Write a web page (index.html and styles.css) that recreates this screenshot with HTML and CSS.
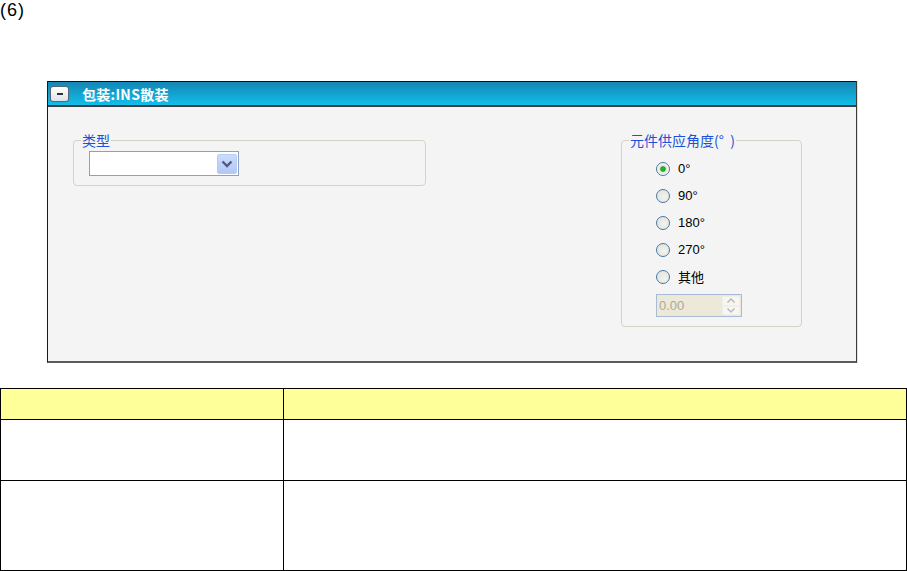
FILE: index.html
```html
<!DOCTYPE html>
<html lang="zh">
<head>
<meta charset="utf-8">
<title>包装:INS散装</title>
<link rel="stylesheet" href="styles.css">
</head>
<body>
<p class="num">(6)</p>
<div class="panel">
  <div class="titlebar">
    <span class="minbtn"><span class="minbar"></span></span>
    <span class="title">包装:INS散装</span>
  </div>
  <div class="pbody">
    <fieldset class="grp grp-type">
      <legend>类型</legend>
      <div class="grp-in">
        <div class="combo">
          <span class="combo-btn">
            <svg width="12" height="8" viewBox="0 0 12 8"><path d="M1.5 1.5 L6 6 L10.5 1.5" fill="none" stroke="#4a5d80" stroke-width="2.4"/></svg>
          </span>
        </div>
      </div>
    </fieldset>
    <fieldset class="grp grp-angle">
      <legend>元件供应角度(°&nbsp;&nbsp;)</legend>
      <div class="grp-in angle-in">
        <div class="radio-row"><span class="radio checked"></span><span class="rlabel">0°</span></div>
        <div class="radio-row"><span class="radio"></span><span class="rlabel">90°</span></div>
        <div class="radio-row"><span class="radio"></span><span class="rlabel">180°</span></div>
        <div class="radio-row"><span class="radio"></span><span class="rlabel">270°</span></div>
        <div class="radio-row"><span class="radio"></span><span class="rlabel">其他</span></div>
        <div class="spin">
          <span class="spin-val">0.00</span>
          <span class="spin-btns">
            <span class="spin-b"><svg width="8" height="5" viewBox="0 0 8 5"><path d="M0.5 4.5 L4 1 L7.5 4.5" fill="none" stroke="#b8b8b0" stroke-width="1.4"/></svg></span>
            <span class="spin-b"><svg width="8" height="5" viewBox="0 0 8 5"><path d="M0.5 0.5 L4 4 L7.5 0.5" fill="none" stroke="#b8b8b0" stroke-width="1.4"/></svg></span>
          </span>
        </div>
      </div>
    </fieldset>
  </div>
</div>
<table class="tbl">
  <tr class="hd"><td class="c1"></td><td></td></tr>
  <tr class="r1"><td class="c1"></td><td></td></tr>
  <tr class="r2"><td class="c1"></td><td></td></tr>
</table>
</body>
</html>
```
FILE: styles.css
```css
html, body {
  margin: 0;
  padding: 0;
  background: #ffffff;
}
body {
  font-family: "Liberation Sans", Arial, "Noto Sans CJK SC", sans-serif;
  width: 907px;
}
.num {
  margin: 0;
  font-size: 18px;
  line-height: 20px;
  height: 20px;
  color: #000;
  letter-spacing: 1px;
}
.panel {
  margin: 61px 0 0 47px;
  width: 808px;
  border-left: 1px solid #1a1a1a;
  border-right: 1px solid #3a3a36;
  border-bottom: 2px solid #5c5c56;
  box-shadow: 1px 0 0 #e6e4d8;
}
.titlebar {
  height: 23px;
  border-top: 1px solid #111;
  border-bottom: 2px solid #3a3f44;
  background: linear-gradient(#1585b4, #10bfea);
  display: flex;
  align-items: center;
}
.minbtn {
  margin-left: 2px;
  width: 17px;
  height: 14px;
  border: 1px solid #59656f;
  border-radius: 3px;
  background: linear-gradient(#ffffff, #dfe3e8);
  display: flex;
  align-items: center;
  justify-content: center;
}
.minbar {
  width: 6px;
  height: 2px;
  background: #2b2f36;
}
.title {
  margin-left: 13px;
  color: #ffffff;
  font-family: "Noto Sans CJK SC", sans-serif;
  font-weight: bold;
  font-size: 14px;
  line-height: 16px;
  letter-spacing: 0.3px;
}
.pbody {
  height: 254px;
  background: #f4f4f4;
  box-sizing: border-box;
  padding: 25px 54px 0 25px;
  display: flex;
  justify-content: space-between;
  align-items: flex-start;
}
.grp {
  margin: 0;
  padding: 0;
  border: 1px solid #d3d3c2;
  border-radius: 4px;
  min-width: 0;
}
.grp legend {
  margin-left: 7px;
  padding: 0 1px;
  font-family: "Noto Sans CJK SC", sans-serif;
  font-size: 14px;
  line-height: 16px;
  color: #1b52d8;
}
.grp-type {
  width: 351px;
}
.grp-type .grp-in {
  padding: 3px 0 9px 15px;
}
.combo {
  width: 148px;
  height: 23px;
  border: 1px solid #8aa2c0;
  background: #ffffff;
  display: flex;
  justify-content: flex-end;
  align-items: center;
}
.combo-btn {
  width: 18px;
  height: 18px;
  margin-right: 1px;
  border: 1px solid #b6cbf5;
  border-radius: 2px;
  background: linear-gradient(#cddbfc, #b3c7f6);
  display: flex;
  align-items: center;
  justify-content: center;
}
.grp-angle {
  width: 179px;
}
.angle-in {
  padding: 7px 0 9px 34px;
}
.radio-row {
  height: 27px;
  display: flex;
  align-items: center;
}
.radio {
  width: 12px;
  height: 12px;
  border: 1px solid #4a78a6;
  border-radius: 50%;
  background: radial-gradient(circle at 60% 60%, #f3f3ee 0%, #e0e0d8 100%);
}
.radio.checked {
  background: radial-gradient(circle, #2fb52f 0, #26a526 2.3px, #dfe9d8 3.3px, #f3f3ee 5px);
}
.rlabel {
  margin-left: 8px;
  font-size: 13px;
  color: #000;
}
.spin {
  margin-top: 4px;
  width: 84px;
  height: 21px;
  border: 1px solid #a7bbd6;
  background: #ece9d8;
  display: flex;
  align-items: center;
  justify-content: space-between;
}
.spin-val {
  margin-left: 2px;
  font-size: 13px;
  color: #aca899;
}
.spin-btns {
  width: 18px;
  height: 19px;
  margin-right: 1px;
  display: flex;
  flex-direction: column;
}
.spin-b {
  flex: 1;
  display: flex;
  align-items: center;
  justify-content: center;
  background: #f6f6f2;
  border: 1px solid #f0f0ea;
}
.tbl {
  margin-top: 25px;
  width: 907px;
  border-collapse: collapse;
}
.tbl td {
  border: 1px solid #000;
  padding: 0;
}
.tbl .c1 {
  width: 282px;
}
.tbl .hd td {
  background: #ffff99;
  height: 30px;
}
.tbl .r1 td {
  height: 60px;
}
.tbl .r2 td {
  height: 89px;
}
```
